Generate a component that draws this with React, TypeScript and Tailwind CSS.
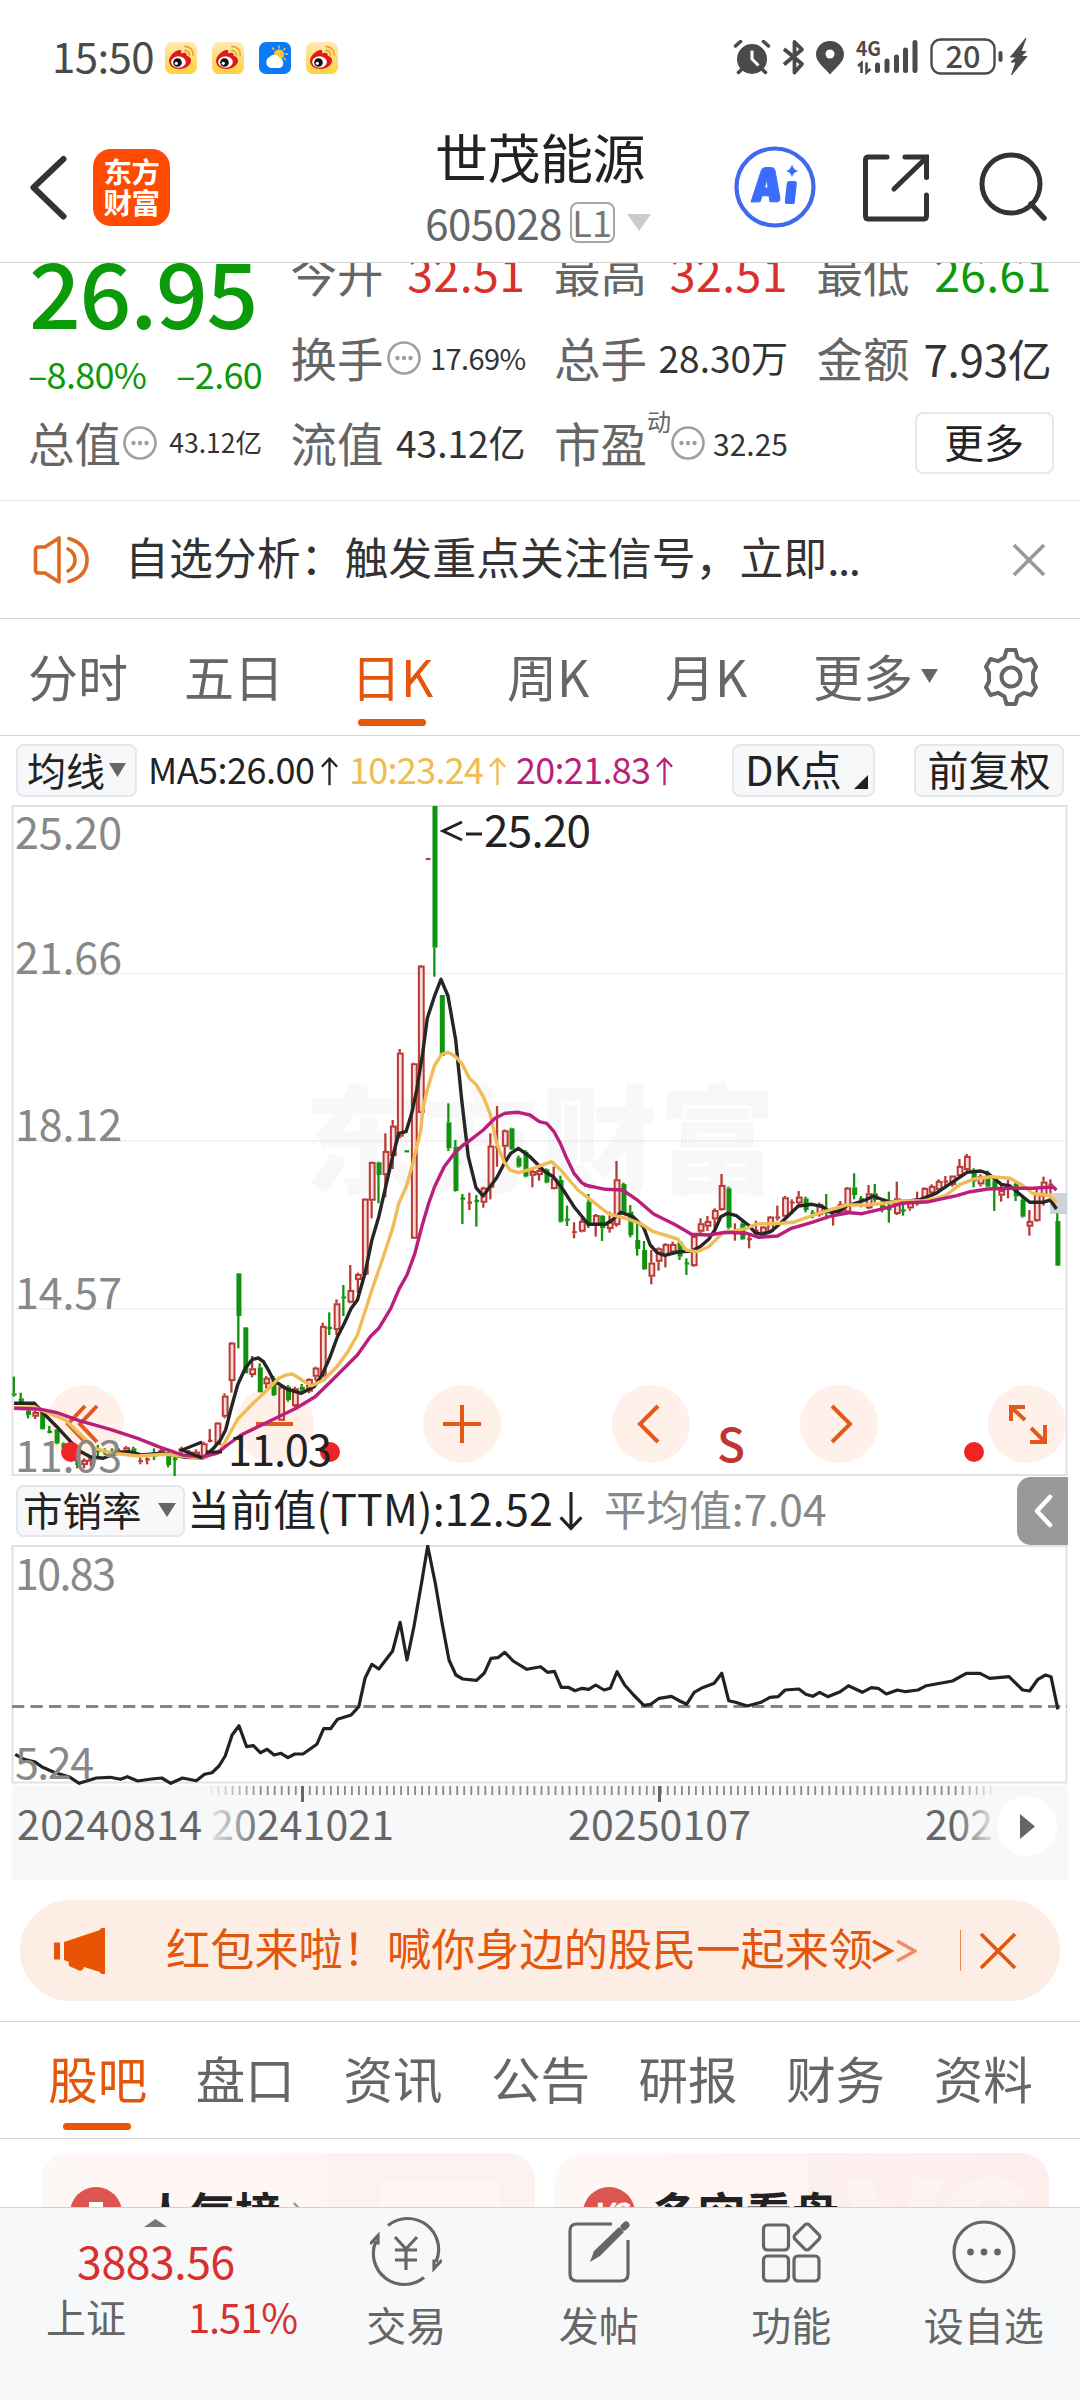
import React from "react";

type Point = [number, number];

const CJK = "'Noto Sans CJK SC', 'Noto Sans', sans-serif";

/* ---------- chart data ---------- */

// Maps a group of plotted points into page space.
const place = (ox: number, oy: number, sx: number, pts: Point[]): Point[] =>
  pts.map(([x, y]) => [ox + x / sx, oy + y / 3]);

const toPoints = (pts: Point[]) => pts.map(([x, y]) => `${x.toFixed(1)},${y.toFixed(1)}`).join(" ");

const ma5: Point[] = [
  ...place(0, 1130, 2.904, [[41,820],[100,820],[125,848],[165,890],[205,935],[235,965],[262,980],[300,985],[330,972],[375,965],[410,975],[470,970],[540,982],[590,983],[620,955],[640,930],[655,900],[670,840],[690,765],[712,715],[733,688],[750,684],[765,695],[782,725],[795,752],[815,765],[835,778],[875,790],[912,770],[935,735],[957,685],[980,620],[1000,580],[1020,535],[1038,510],[1060,430],[1080,330],[1100,260],[1120,170],[1140,80],[1158,10]]),
  ...place(300, 790, 3, [[318,1025],[335,970],[350,900],[368,790],[382,685],[403,620],[423,568],[444,618],[467,750],[485,930],[505,1100],[528,1193],[549,1218],[570,1190],[590,1163],[612,1122],[632,1090],[655,1075],[690,1100],[735,1145],[760,1160],[790,1200],[822,1250],[865,1303]]),
  ...place(540, 1050, 2.904, [[142,523],[190,523],[210,510],[235,487],[270,500],[300,530],[320,585],[340,608],[362,616],[400,606],[440,603],[465,590],[490,568],[508,540],[525,500],[545,490],[570,497],[605,525],[625,548],[645,553],[670,545],[700,518],[750,468],[790,463],[820,470],[845,487],[870,483],[890,468],[945,450],[968,438],[990,447],[1020,457],[1100,450],[1150,430],[1200,395],[1240,367],[1280,363],[1300,370],[1340,403],[1365,408],[1390,430],[1422,457],[1460,457],[1482,450],[1500,477]]),
];

const ma10: Point[] = [
  ...place(0, 1130, 2.904, [[41,833],[100,830],[125,843],[190,870],[250,930],[275,955],[320,968],[400,978],[480,973],[560,982],[600,980],[640,960],[665,915],[690,868],[730,825],[770,785],[810,745],[830,735],[850,732],[880,752],[905,767],[940,750],[980,708],[1010,665],[1038,615],[1055,560],[1080,480],[1110,390],[1140,295],[1158,220],[1180,170],[1200,95],[1222,0]]),
  ...place(300, 790, 3, [[368,960],[382,900],[403,828],[425,793],[444,787],[467,800],[487,823],[508,865],[528,883],[550,920],[570,970],[590,1060],[612,1115],[630,1140],[655,1148],[690,1138],[755,1115]]),
  ...place(540, 1050, 2.904, [[60,360],[110,420],[160,460],[200,492],[250,505],[290,520],[330,545],[400,567],[425,600],[455,605],[490,590],[530,550],[600,535],[630,522],[700,520],[735,517],[790,497],[840,480],[890,465],[945,465],[1000,460],[1050,452],[1110,453],[1150,445],[1180,435],[1220,403],[1260,387],[1310,380],[1365,385],[1400,405],[1430,430],[1480,437],[1500,457]]),
];

const ma20: Point[] = [
  ...place(0, 1130, 2.904, [[41,835],[120,838],[165,848],[230,872],[320,898],[400,925],[460,950],[530,975],[590,980],[630,970],[660,945],[700,915],[760,885],[860,835],[915,800],[960,755],[1038,675],[1075,620],[1100,595],[1135,535],[1160,475],[1182,435],[1205,370],[1225,290],[1245,220],[1262,170],[1290,110],[1320,70],[1345,45]]),
  ...place(300, 790, 3, [[505,1055],[550,1020],[585,985],[615,970],[655,967],[690,975],[718,995],[740,1000],[762,1025],[780,1058],[800,1105],[822,1150],[845,1178],[870,1190]]),
  ...place(540, 1050, 2.904, [[130,405],[190,418],[240,420],[285,452],[330,492],[390,523],[440,553],[490,555],[540,547],[600,550],[635,562],[690,558],[730,535],[790,517],[845,498],[900,488],[935,491],[1000,475],[1050,460],[1130,455],[1210,437],[1250,425],[1300,417],[1360,415],[1430,415],[1490,411],[1500,420]]),
];

const ratioLine: Point[] = place(0, 1470, 1.452, [[22,853],[35,868],[50,875],[62,892],[80,908],[100,920],[115,940],[140,924],[160,922],[175,928],[185,920],[200,933],[220,927],[235,924],[248,940],[265,924],[285,932],[297,913],[308,908],[318,888],[327,858],[337,795],[347,767],[358,830],[368,827],[378,848],[388,838],[398,855],[408,850],[418,863],[428,852],[440,852],[460,823],[470,776],[480,776],[490,748],[510,735],[521,710],[530,625],[540,583],[550,597],[570,543],[581,457],[591,570],[601,470],[612,340],[621,228],[632,340],[642,460],[652,570],[662,615],[672,627],[692,631],[703,610],[713,565],[723,563],[733,547],[745,573],[765,598],[785,590],[795,607],[805,604],[815,652],[825,652],[835,662],[845,655],[855,658],[865,645],[877,660],[886,655],[896,605],[907,645],[920,675],[935,706],[945,703],[957,685],[975,679],[987,693],[997,703],[1008,667],[1020,653],[1037,640],[1048,610],[1058,692],[1068,697],[1085,708],[1105,697],[1118,682],[1130,680],[1140,660],[1160,657],[1170,673],[1180,679],[1190,667],[1202,680],[1220,665],[1232,647],[1252,667],[1265,653],[1275,655],[1287,672],[1303,660],[1315,665],[1333,660],[1345,647],[1383,633],[1403,610],[1423,610],[1437,625],[1465,620],[1485,660],[1495,663],[1507,628],[1518,615],[1526,620],[1536,718]]);

// [x, high, body top, body bottom, low, rising]
type Candle = [number, number, number, number, number, 0 | 1];

const scaleCandles = (ox: number, oy: number, sx: number, rows: Candle[]): Candle[] =>
  rows.map(([x, h, t, b, l, up]) => [ox + x / sx, oy + h / 3, oy + t / 3, oy + b / 3, oy + l / 3, up]);

const candles: Candle[] = [
  ...scaleCandles(0, 1130, 2.904, [
    [41,740,790,797,800,0],[61,788,805,820,820,0],[82,838,842,855,865,0],[103,843,846,860,867,1],[123,845,845,898,898,0],[144,888,903,908,910,0],[165,898,898,940,943,0],[185,937,940,955,960,0],[225,975,980,1005,1015,0],[245,985,990,1005,1015,1],[265,980,985,995,1010,1],[285,945,960,966,980,0],[305,955,960,970,975,0],[326,955,962,968,975,0],[346,955,960,972,975,1],[367,948,952,965,968,1],[388,950,955,970,975,0],[408,982,990,997,1003,1],[428,982,986,990,1003,1],[448,955,975,980,990,0],[469,955,960,970,978,1],[489,965,970,1005,1012,0],[508,970,985,990,1038,0],[528,950,955,965,970,1],[550,960,965,980,985,1],[570,958,965,978,982,1],
    [592,935,940,985,988,1],[610,897,930,935,937,1],[632,876,878,945,945,1],[653,790,797,860,865,1],[673,636,638,753,788,1],[693,430,430,558,655,0],[713,592,592,730,730,0],[733,678,715,735,742,1],[755,700,712,787,787,0],[774,738,743,763,775,1],[795,738,745,795,798,0],[817,768,770,872,872,1],[837,765,770,810,815,0],[857,770,775,828,832,1],[877,762,770,782,788,0],[898,745,747,785,790,1],[917,710,713,740,752,1],[938,578,588,740,742,1],[957,547,592,596,615,0],[978,508,520,600,615,1],[998,465,500,505,558,0],[1018,405,480,518,520,1],[1040,428,432,450,490,1],[1060,205,206,434,434,1],[1080,95,96,212,265,1],[1100,95,97,135,220,0],
  ]),
  ...scaleCandles(300, 790, 3, [
    [257,1030,1083,1155,1222,1],[279,990,1007,1098,1137,1],[300,777,788,1040,1045,1],[320,1082,1082,1086,1086,0],[342,818,820,1346,1346,1],[363,525,527,969,969,1],[384,205,205,209,209,1],[404,48,48,473,560,0],[426,615,615,798,798,0],[446,940,997,1075,1083,0],[467,1050,1070,1203,1205,0],[488,1212,1224,1228,1302,0],[509,1208,1236,1240,1260,1],[530,1215,1231,1235,1310,0],[551,1190,1193,1238,1253,1],[572,1030,1067,1193,1228,1],[592,948,1070,1074,1130,1],[615,1018,1021,1070,1110,1],[635,1013,1015,1078,1080,0],[656,1097,1103,1130,1133,0],[677,1080,1085,1160,1162,0],[698,1138,1143,1157,1192,1],[718,1130,1140,1155,1172,1],[740,1135,1138,1178,1180,0],[762,1130,1165,1197,1198,1],[782,1157,1170,1295,1298,0],[802,1247,1287,1291,1308,0],[823,1297,1323,1330,1345,1],[846,1285,1293,1325,1327,1],[866,1212,1235,1308,1314,0],[888,1272,1275,1307,1340,1],
  ]),
  ...scaleCandles(540, 1050, 2.904, [
    [181,495,497,535,573,0],[203,485,515,537,548,1],[223,333,388,525,530,1],[243,398,402,488,490,0],[263,465,485,555,562,0],[283,515,570,597,617,0],[303,573,600,658,660,0],[324,600,638,680,703,1],[345,592,595,635,662,1],[365,580,582,618,652,1],[386,575,582,607,610,1],[406,572,575,620,630,0],[426,625,638,643,675,0],[447,555,558,648,650,1],[467,505,520,545,550,1],[487,498,513,530,543,1],[508,475,480,508,540,1],[528,372,405,480,482,1],[548,410,415,533,538,0],[567,520,545,550,572,1],[588,515,520,568,570,0],[608,553,565,570,595,1],[628,512,540,545,556,1],[648,528,530,550,552,1],[669,498,500,545,548,1],[690,467,500,505,512,1],[712,438,442,500,500,1],[732,448,455,460,492,1],[752,423,440,460,465,1],[772,440,445,480,487,0],[792,480,488,492,505,0],[812,458,462,495,500,1],[832,432,485,490,508,0],[852,478,495,500,527,1],[873,453,462,485,490,1],[893,411,413,487,488,1],[913,370,412,435,448,0],[933,438,445,450,472,0],[955,405,430,475,478,1],[973,402,430,450,457,0],[994,450,455,480,487,0],[1014,425,475,480,518,0],[1037,395,445,492,495,1],[1055,450,480,483,497,0],[1075,448,455,475,482,1],[1096,425,445,450,467,1],[1117,412,414,450,455,1],[1138,403,408,430,440,1],[1158,388,393,420,430,1],[1178,378,392,397,410,1],[1198,376,377,405,410,1],[1219,327,348,378,380,1],[1240,312,318,360,362,1],[1260,355,360,395,412,0],[1280,373,378,403,410,1],[1300,362,370,410,412,0],[1320,378,392,415,483,0],[1340,400,420,437,455,1],[1360,390,410,414,445,1],[1382,393,400,440,453,0],[1402,440,450,500,503,0],[1422,480,513,530,557,1],[1443,412,430,513,515,1],[1463,380,395,440,467,1],[1483,388,402,406,430,1],[1503,490,513,647,648,0],
  ]),
];

/* ---------- small pieces ---------- */

const Caret = ({ className }: { className: string }) => (
  <svg viewBox="0 0 16 13" preserveAspectRatio="none" className={className}>
    <path d="M0 0h16L8 13z" fill="currentColor" />
  </svg>
);

const InfoDots = () => (
  <svg viewBox="0 0 34 34" className="h-[34px] w-[34px] shrink-0 text-[#a0a0a0]">
    <circle cx="17" cy="17" r="15.5" fill="none" stroke="currentColor" strokeWidth="2.6" />
    <circle cx="10.5" cy="17" r="2.2" fill="currentColor" />
    <circle cx="17" cy="17" r="2.2" fill="currentColor" />
    <circle cx="23.5" cy="17" r="2.2" fill="currentColor" />
  </svg>
);

const WeiboIcon = () => (
  <svg viewBox="0 0 32 32" className="h-8 w-8">
    <defs>
      <linearGradient id="weiboBg" x1="0" y1="0" x2="0" y2="1">
        <stop offset="0" stopColor="#fdeab8" />
        <stop offset="1" stopColor="#fdd23e" />
      </linearGradient>
    </defs>
    <rect width="32" height="32" rx="7" fill="url(#weiboBg)" />
    <path d="M4 19c0-5 6-10.5 10-11 3-.3 2.5 2 2 3.5 3-1.5 6.5-1 5.5 2 3 1 5 3 4.5 6C25 24.5 19 27 14 27S4 24 4 19z" fill="#e01a1a" />
    <ellipse cx="13.5" cy="20" rx="7.3" ry="5.8" fill="#fff" />
    <circle cx="12.5" cy="20.5" r="4.3" fill="#111" />
    <circle cx="11.3" cy="21.3" r="1.6" fill="#fff" />
    <path d="M20 4.5c5 0 8.5 3.5 8.3 8.8M20 8.5c3 0 4.6 2 4.4 4.5" fill="none" stroke="#f4a62a" strokeWidth="1.8" strokeLinecap="round" />
  </svg>
);

const WeatherIcon = () => (
  <svg viewBox="0 0 32 32" className="h-8 w-8">
    <rect width="32" height="32" rx="7" fill="#0b7bf5" />
    <circle cx="20" cy="12.5" r="5" fill="#ffc83a" />
    <path d="M20 4v2M26 6.5l-1.2 1.4M28.5 12h-2M13.5 6l1.3 1.5M26.5 17.5L25 16.4" stroke="#ffc83a" strokeWidth="1.4" strokeLinecap="round" />
    <path d="M11.5 26a6 6 0 0 1-.6-11.2 5.6 5.6 0 0 1 9.5 1.2A5.3 5.3 0 0 1 21 26z" fill="#fff" />
  </svg>
);

/* ---------- sections ---------- */

const StatusBar = () => (
  <div className="flex h-[110px] shrink-0 items-start justify-between pl-[52px] pr-[52px] pt-[36px] text-[#4a4a4a]">
    <div className="flex h-[44px] items-center">
      <span className="w-[113px] -translate-y-[3px] text-[42px] leading-none tracking-[-0.6px]">15:50</span>
      <div className="flex gap-[15px]">
        <WeiboIcon />
        <WeiboIcon />
        <WeatherIcon />
        <WeiboIcon />
      </div>
    </div>
    <svg viewBox="732 36 296 40" className="h-[40px] w-[296px]" fill="none">
      <circle cx="752" cy="59" r="15" fill="#4a4a4a" />
      <path d="M735.5 46l5-4.5M768.5 46l-5-4.5M742 69l-3.5 3.5M762 69l3.5 3.5" stroke="#4a4a4a" strokeWidth="3.5" strokeLinecap="round" />
      <path d="M752 50.5V59l6.5 6.5" stroke="#fff" strokeWidth="3" />
      <path d="M784 49l18 15-7.5 8.5V42l7.5 7.5-18 15" stroke="#4a4a4a" strokeWidth="3.8" strokeLinejoin="round" />
      <path d="M830 41c8 0 14 6 14 13.5 0 8-9.5 14-14 20-4.5-6-14-12-14-20C816 47 822 41 830 41z" fill="#4a4a4a" />
      <circle cx="830" cy="54" r="4.5" fill="#fff" />
      <text x="856" y="56" fontSize="20" fontWeight="700" textLength="25" lengthAdjust="spacingAndGlyphs" fill="#4a4a4a">4G</text>
      <path d="M858 66l3.5-3v10M866.5 62.5v10l4-3.5" stroke="#4a4a4a" strokeWidth="2.6" />
      <path d="M877.5 65v5.5M887 61v9.5M896.5 57v13.5M905.5 50v20.5M915 42.5v28" stroke="#4a4a4a" strokeWidth="5" strokeLinecap="round" />
      <rect x="931.5" y="39.5" width="63" height="34" rx="9" stroke="#4a4a4a" strokeWidth="2.4" />
      <text x="963" y="67.5" textAnchor="middle" fontSize="31" fontWeight="500" textLength="35" lengthAdjust="spacingAndGlyphs" fill="#4a4a4a">20</text>
      <path d="M1000.5 53v7" stroke="#4a4a4a" strokeWidth="4" strokeLinecap="round" />
      <path d="M1026 38l-15.5 19h6l-5.5 5h5l-4.5 13 15.5-18.5h-6l5-5h-5z" fill="#4a4a4a" stroke="#4a4a4a" strokeWidth="1" />
    </svg>
  </div>
);

const Header = () => (
  <div className="flex h-[153px] shrink-0 border-b border-[#d2d2d2]">
    <div className="flex w-[360px] items-start pl-[28px] pt-[39px]">
      <svg viewBox="0 0 40 70" className="mt-[4px] h-[70px] w-[40px]">
        <path d="M35.5 6L5.5 34.5l30 29" fill="none" stroke="#333" strokeWidth="6" strokeLinecap="round" strokeLinejoin="round" />
      </svg>
      <div className="ml-[25px] flex h-[77px] w-[77px] flex-col items-center justify-center rounded-[18px] bg-[#ff4a04] pb-[4px] text-[28.5px] font-bold leading-[31px] tracking-[-0.5px] text-white">
        <span>东方</span>
        <span>财富</span>
      </div>
    </div>
    <div className="flex w-[360px] flex-col items-center pt-[16px]">
      <span className="text-[53px] leading-[60px] tracking-[-0.5px] text-[#222]">世茂能源</span>
      <div className="mt-[12px] flex items-center pr-[4px]">
        <span className="text-[42px] leading-[48px] tracking-[-0.6px] text-[#666]">605028</span>
        <span className="ml-[8px] flex h-[41px] w-[45px] items-center justify-center rounded-[8px] border-2 border-[#a5a5a5] pb-[3px] text-[36px] leading-none text-[#777]">L1</span>
        <Caret className="ml-[12px] h-[17px] w-[24px] text-[#ccc]" />
      </div>
    </div>
    <svg viewBox="720 110 360 150" className="h-[150px] w-[360px] shrink-0" fill="none">
      <circle cx="775" cy="187" r="38.5" stroke="#4169ee" strokeWidth="4.2" />
      <g transform="translate(720 60)" fill="#3a6cff">
        <path fillRule="evenodd" d="M31 142L41.5 110Q42.5 107.5 46 107.5h5Q54.5 107.5 55 110.5l5 28q.3 3-2.5 3.3h-7.5l-1-6h-7l-2 6zM44.5 128h3.5l-1-9z" stroke="#3a6cff" strokeWidth="1" />
        <path d="M69 121h5.5q2.500 0 2.300 2.500l-2 19q-.3 1.500-2 1.500H66.500q-2-.2-1.700-2.200l2-18.500q.4-2.300 2.200-2.300z" />
        <path d="M72 104.5q1.500 5.500 6.500 6.500-5 1-6.500 6-1.500-5-6-6 4.500-1 6-6.500z" />
      </g>
      <path d="M887 157h-18.5q-3 0-3 3v56q0 3 3 3h55q3 0 3-3v-21M905 157h21.500v20.500M894 189l31-30" stroke="#333" strokeWidth="5" strokeLinecap="round" />
      <circle cx="1011" cy="184" r="29" stroke="#333" strokeWidth="5" />
      <path d="M1031 204l13 14" stroke="#333" strokeWidth="5.5" strokeLinecap="round" />
    </svg>
  </div>
);

const Quote = ({ label, children }: { label: React.ReactNode; children: React.ReactNode }) => (
  <div className="flex h-[85px] items-center justify-between whitespace-nowrap">
    <span className="flex items-center text-[46.5px] leading-none text-[#666]">{label}</span>
    {children}
  </div>
);

const QuotePanel = () => (
  <div className="h-[238px] shrink-0 overflow-hidden border-b border-[#e6e6e6]">
    <div className="-mt-[33px] grid grid-cols-[234px_235px_234px_235px] gap-x-[28.500px] pl-[28px] leading-none">
      <div className="row-span-2 flex h-[170px] flex-col text-[#0a9a0a]">
        <span className="mt-[14px] h-[105px] whitespace-nowrap pl-[1px] text-[91px] font-medium leading-[91px] tracking-[-1.3px]">26.95</span>
        <div className="flex justify-between text-[36px] leading-[48px] tracking-[-0.7px]">
          <span>–8.80%</span>
          <span>–2.60</span>
        </div>
      </div>
      <Quote label="今开"><span className="text-[46.5px] tracking-[0.4px] text-[#d8302c]">32.51</span></Quote>
      <Quote label="最高"><span className="text-[46.5px] tracking-[0.4px] text-[#d8302c]">32.51</span></Quote>
      <Quote label="最低"><span className="text-[46.5px] tracking-[0.2px] text-[#0a9a0a]">26.61</span></Quote>
      <Quote label={<>换手<span className="ml-[3px]"><InfoDots /></span></>}><span className="text-[29px] tracking-[-0.6px] text-[#333]">17.69%</span></Quote>
      <Quote label="总手"><span className="text-[37px] text-[#333]">28.30万</span></Quote>
      <Quote label="金额"><span className="text-[44px] tracking-[-0.3px] text-[#333]">7.93亿</span></Quote>
      <Quote label={<>总值<span className="ml-[2px]"><InfoDots /></span></>}><span className="text-[26.5px] text-[#333]">43.12亿</span></Quote>
      <Quote label="流值"><span className="text-[37px] text-[#333]">43.12亿</span></Quote>
      <Quote label={<>市盈<span className="-mt-[44px] text-[24px]">动</span><InfoDots /></>}>
        <span className="text-[30px] text-[#333]">32.25</span>
      </Quote>
      <div className="flex h-[85px] items-center justify-end">
        <div className="mt-[1px] flex h-[62px] w-[139px] translate-x-[2px] items-center justify-center rounded-[8px] border-2 border-[#e8e8e8] pb-[4px] text-[40px] text-[#222]">更多</div>
      </div>
    </div>
  </div>
);

const Notice = () => (
  <div className="flex h-[118px] shrink-0 items-center border-b border-[#d2d2d2] pl-[32px] pr-[33px]">
    <svg viewBox="0 0 60 50" className="h-[50px] w-[60px]" fill="none" stroke="#e06a22" strokeWidth="3.6" strokeLinejoin="round" strokeLinecap="round">
      <path d="M3.5 15q0-3 3-3H13L27 3v44l-14-9H6.5q-3 0-3-3z" />
      <path d="M36 14q7 3.5 7 11t-7 11M37 3.5Q55 9 55 25T37 46.5" />
    </svg>
    <span className="ml-[33px] flex-1 pb-[6px] text-[43.9px] leading-none text-[#333]">自选分析：触发重点关注信号，立即<span className="tracking-[-1.4px]">...</span></span>
    <svg viewBox="0 0 36 36" className="h-[36px] w-[36px]">
      <path d="M3 3l30 30M33 3L3 33" stroke="#999" strokeWidth="3.6" />
    </svg>
  </div>
);

const PeriodTabs = () => (
  <div className="flex h-[117px] shrink-0 items-center border-b border-[#d2d2d2] text-[50px] leading-none text-[#666]">
    <span className="ml-[28px] w-[156px] pb-[4px]">分时</span>
    <span className="w-[167px] pb-[4px]">五日</span>
    <div className="relative flex h-full w-[156px] items-center pb-[4px] text-[#e2560d]">
      日K
      <i className="absolute bottom-[9px] left-[7px] h-[7px] w-[68px] rounded-full bg-[#e8560a]" />
    </div>
    <span className="w-[158px] pb-[4px]">周K</span>
    <span className="w-[148px] pb-[4px]">月K</span>
    <span className="w-[108px] pb-[4px]">更多</span>
    <Caret className="-mt-[2px] h-[14px] w-[17px] text-[#666]" />
    <svg viewBox="0 0 60 60" className="ml-[43px] h-[60px] w-[60px]" fill="none" stroke="#666" strokeWidth="4" strokeLinejoin="round">
      <path d="M25.5 3h9l2 7.5 6.5 3.7 7.5-2.2 4.5 7.8-3 5.7v9l3 5.7-4.5 7.8-7.5-2.2-6.5 3.7-2 7.5h-9l-2-7.5-6.5-3.7-7.5 2.2L5 40.2l3-5.7v-9L5 19.8 9.500 12l7.500 2.200 6.500-3.700z" />
      <circle cx="30" cy="30" r="9.5" />
    </svg>
  </div>
);

const chip = "flex items-center rounded-[8px] border-2 border-[#e4e7eb] bg-[#f7f8fa] leading-none text-[#222]";

const Arrow = ({ down = false }: { down?: boolean }) => (
  <svg viewBox="0 0 20 30" className={down ? "ml-[5px] inline-block h-[39px] w-[26px] rotate-180 align-[-5px]" : "ml-[5px] inline-block h-[30px] w-[19px] align-[-2px]"}>
    <path d="M10 30V2M2 10.5l8-8.5 8 8.5" fill="none" stroke="currentColor" strokeWidth="2.4" />
  </svg>
);

const AverageRow = () => (
  <div className="flex h-[68px] shrink-0 items-center whitespace-nowrap pl-[16px] pr-[16px]">
    <div className={`${chip} h-[53px] w-[121px] pb-[2px] pl-[9px] text-[39px]`}>
      均线
      <Caret className="ml-[4px] mt-[2px] h-[14px] w-[17px] text-[#666]" />
    </div>
    <span className="ml-[11px] w-[201px] pb-[4px] text-[36px] leading-none tracking-[-0.5px] text-[#222]">MA5:26.00<Arrow /></span>
    <span className="w-[167px] pb-[4px] text-[36px] leading-none tracking-[-0.7px] text-[#f0bb52]">10:23.24<Arrow /></span>
    <span className="pb-[4px] text-[36px] leading-none tracking-[-0.7px] text-[#bb1f7c]">20:21.83<Arrow /></span>
    <div className={`${chip} ml-auto h-[53px] w-[143px] justify-between pb-[2px] pl-[11px] pr-[5px] text-[41.500px]`}>
      DK点
      <svg viewBox="0 0 14 14" className="mt-[26px] h-[14px] w-[14px]"><path d="M14 0v14H0z" fill="#222" /></svg>
    </div>
    <div className={`${chip} ml-[39px] h-[53px] w-[150px] justify-center pb-[3px] text-[41px]`}>前复权</div>
  </div>
);

const RoundButton = ({ children }: { children: React.ReactNode }) => (
  <svg viewBox="-39 -39 78 78" className="h-[78px] w-[78px] shrink-0" fill="none" stroke="#e2591a" strokeWidth="4">
    <circle r="39" fill="#fff1e9" stroke="none" />
    {children}
  </svg>
);

const PriceChart = () => (
  <div className="relative h-[672px] shrink-0">
    <div className="absolute inset-x-0 top-[581px] flex pl-[46px]">
      <div className="w-[190px]"><RoundButton><path d="M0-18L-17 0 0 18M12-18L-5 0 12 18" /></RoundButton></div>
      <div className="w-[187px]"><RoundButton><path d="M-19 0H18" /></RoundButton></div>
      <div className="w-[189px]"><RoundButton><path d="M-19 0H19M0-19V19" /></RoundButton></div>
      <div className="w-[188px]"><RoundButton><path d="M7-18L-11 0 7 18" /></RoundButton></div>
      <div className="w-[188px]"><RoundButton><path d="M-7-18L11 0-7 18" /></RoundButton></div>
      <RoundButton><path d="M-2-17H-16V-3M-16-17L-2-4M18 1V18H3M18 18L4 4" /></RoundButton>
    </div>
    <svg viewBox="0 804 1080 672" className="pointer-events-none relative block h-[672px] w-[1080px]" fill="none">
      <text x="304" y="1184" fontSize="117" fontWeight="900" fill="#f8f8f8" textLength="472">东方财富</text>
      <path d="M12.5 973.5H1067M12.5 1141H1067M12.5 1309H1067" stroke="#e0e0e0" strokeWidth="1.3" strokeDasharray="2 2" />
      <rect x="12.5" y="806" width="1054" height="669" stroke="#e2e2e2" strokeWidth="2" />
      <rect x="1050" y="1193" width="17" height="21" fill="#cfd2d9" />
      {candles.map(([x, high, top, bottom, low, up], i) => {
        const color = up ? "#b83a35" : "#109410";
        const thin = bottom - top < 3;
        return (
          <g key={i} stroke={color} fill={up && !thin ? "#fbdcd9" : color}>
            {high < top && <path d={`M${x - 0.3} ${high}V${top}`} strokeWidth="2.3" />}
            {low > bottom && <path d={`M${x - 0.3} ${bottom}V${low}`} strokeWidth="2.3" />}
            {thin ? (
              <path d={`M${x - 2.2} ${(top + bottom) / 2}H${x + 2.5}`} strokeWidth="2.2" />
            ) : up ? (
              <rect x={x - 2.1} y={top + 0.9} width="4.8" height={Math.max(bottom - top - 1.8, 1)} strokeWidth="2" />
            ) : (
              <rect x={x - 2.2} y={top} width="5" height={bottom - top} stroke="none" />
            )}
          </g>
        );
      })}
      <g strokeWidth="3.4" strokeLinejoin="round">
        <polyline points={toPoints(ma5)} stroke="#262626" />
        <polyline points={toPoints(ma10)} stroke="#efbc55" />
        <polyline points={toPoints(ma20)} stroke="#bb1f7c" />
      </g>
      <g fill="#f02424">
        <circle cx="71" cy="1452" r="10" />
        <circle cx="330" cy="1452" r="10" />
        <circle cx="974" cy="1452" r="10" />
      </g>
      <g fill="#888" fontSize="43">
        <text x="15" y="849" textLength="107">25.20</text>
        <text x="15" y="974" textLength="107">21.66</text>
        <text x="15" y="1141" textLength="107">18.12</text>
        <text x="15" y="1309" textLength="107">14.57</text>
        <text x="15" y="1472" textLength="107">11.03</text>
      </g>
      <path d="M462 822l-19 9 19 9M466 834h16M202 1442l-20 8 20 8M206 1452h16" stroke="#222" strokeWidth="3" />
      <text x="484" y="847" fontSize="44" fill="#222" textLength="107">25.20</text>
      <text x="717" y="1462" fontSize="46" fontWeight="500" fill="#c03433" textLength="28" lengthAdjust="spacingAndGlyphs">S</text>
      <text x="228" y="1466" fontSize="43.5" fill="#222" textLength="104">11.03</text>
    </svg>
  </div>
);

const IndicatorRow = () => (
  <div className="flex h-[69px] shrink-0 items-center whitespace-nowrap pl-[16px] pr-[12px]">
    <div className={`${chip} h-[52px] w-[169px] pb-[3px] pl-[5px] text-[39.500px]`}>
      市销率
      <Caret className="ml-[16px] mt-[2px] h-[14px] w-[18px] text-[#666]" />
    </div>
    <span className="ml-[2px] w-[417px] pb-[5px] text-[43px] leading-none tracking-[0.15px] text-[#222]">当前值(TTM):12.52<Arrow down /></span>
    <span className="pb-[5px] text-[42.5px] leading-none tracking-[0.1px] text-[#888]">平均值:7.04</span>
    <div className="ml-auto flex h-[68px] w-[51px] items-center justify-center rounded-l-[14px] bg-[#999]">
      <svg viewBox="0 0 20 34" className="h-[34px] w-[20px]"><path d="M17 3L4 17l13 14" fill="none" stroke="#fff" strokeWidth="4.5" strokeLinecap="round" strokeLinejoin="round" /></svg>
    </div>
  </div>
);

const ticks = Array.from({ length: 113 }, (_, i) => 204.5 + i * 7.02);

const RatioChart = () => (
  <svg viewBox="0 1545 1080 335" className="block h-[335px] w-[1080px] shrink-0" fill="none">
    <defs>
      <linearGradient id="fadeLeft"><stop offset="0" stopColor="#f7f8fa" /><stop offset="1" stopColor="#f7f8fa" stopOpacity="0" /></linearGradient>
      <linearGradient id="fadeRight"><stop offset="0" stopColor="#f7f8fa" stopOpacity="0" /><stop offset="1" stopColor="#f7f8fa" /></linearGradient>
    </defs>
    <rect x="12.5" y="1546" width="1054" height="236.5" stroke="#e2e2e2" strokeWidth="2" />
    <path d="M12 1706.5H1067" stroke="#858585" strokeWidth="3.2" strokeDasharray="12.3 6.2" />
    <polyline points={toPoints(ratioLine)} stroke="#222" strokeWidth="3.2" strokeLinejoin="round" />
    <rect x="12" y="1785" width="1056" height="95" fill="#f7f8fa" />
    <path d={ticks.map((x) => `M${x.toFixed(1)} 1786V1795`).join("")} stroke="#888" strokeWidth="1.8" />
    <path d="M302.5 1786V1802M659.5 1786V1802" stroke="#666" strokeWidth="3" />
    <g fontSize="43">
      <g fill="#888">
        <text x="15" y="1590" textLength="101">10.83</text>
        <text x="15" y="1779" textLength="79">5.24</text>
      </g>
      <g fill="#666" fontSize="41">
        <text x="17" y="1840" textLength="185">20240814</text>
        <text x="211" y="1840" textLength="183">20241021</text>
        <text x="568" y="1840" textLength="183">20250107</text>
        <text x="925" y="1840" textLength="68">202</text>
      </g>
    </g>
    <rect x="203" y="1785" width="60" height="94" fill="url(#fadeLeft)" />
    <rect x="955" y="1785" width="45" height="94" fill="url(#fadeRight)" />
    <circle cx="1027" cy="1826" r="30" fill="#fff" />
    <path d="M1020 1814l15 12.5-15 12.5z" fill="#666" />
  </svg>
);

const Banner = () => (
  <div className="mx-[20px] mt-[20px] flex h-[101px] shrink-0 items-center rounded-full bg-[#fceee5] pl-[34px] pr-[43px] text-[#e2560d]">
    <svg viewBox="0 0 52 46" className="h-[46px] w-[52px] text-[#e85404]" fill="currentColor">
      <path d="M0 14.5h6v17H0zM10 14L46 2q0-2 2-2h3v46h-3q-1.5 0-2-2L30 39q-2 6-7 2.5l-7-3q-2-1-1-4.5l-5-2z" />
    </svg>
    <span className="ml-[60px] whitespace-nowrap pb-[6px] text-[44.2px] leading-none">红包来啦！喊你身边的股民一起来领</span>
    <svg viewBox="0 0 46 24" className="-ml-[2px] h-[24px] w-[46px]" fill="none" strokeWidth="3.4">
      <path d="M2 2l18 10L2 22" stroke="#e2560d" />
      <path d="M26 2l18 10-18 10" stroke="#ec8d5e" />
    </svg>
    <i className="ml-auto mr-[18px] h-[41px] w-[1.5px] bg-[#e58a55]" />
    <svg viewBox="0 0 38 38" className="h-[38px] w-[38px]"><path d="M2 2l34 34M36 2L2 36" stroke="#e2560d" strokeWidth="3.6" /></svg>
  </div>
);

const sections = ["股吧", "盘口", "资讯", "公告", "研报", "财务", "资料"];

const SectionTabs = () => (
  <div className="mt-[20px] grid h-[118px] shrink-0 grid-cols-7 border-y border-[#d2d2d2] pl-[24px] pr-[23px] text-[49.500px] leading-none text-[#666]">
    {sections.map((name, i) => (
      <div key={name} className={i === 0 ? "relative flex items-center justify-center pb-[5px] text-[#e2560d]" : "flex items-center justify-center pb-[5px]"}>
        {name}
        {i === 0 && <i className="absolute bottom-[8px] left-[39px] h-[7px] w-[68px] rounded-full bg-[#e8560a]" />}
      </div>
    ))}
  </div>
);

const Cards = () => (
  <div className="flex min-h-0 flex-1 items-start gap-[20px] overflow-hidden px-[41px] pt-[14px]">
    <div className="relative flex h-[120px] w-[494px] shrink-0 items-center overflow-hidden rounded-[28px] bg-[linear-gradient(90deg,#fef8f5_0%,#fef6f4_57.5%,#fdf2f0_58%,#fdf2f0_100%)] pl-[29px]">
      <i className="absolute left-[339px] top-[27px] h-[93px] w-[120px] bg-[#fef6f4]" />
      <svg viewBox="0 0 52 52" className="h-[52px] w-[52px]"><circle cx="26" cy="26" r="26" fill="#dc5550" /><path d="M10 24h9v-9h14v13h9v16H10z" fill="#fff" /></svg>
      <span className="ml-[21px] pb-[4px] text-[46px] font-bold leading-none text-[#222]">人气榜</span>
      <svg viewBox="0 0 12 22" className="ml-[12px] h-[22px] w-[12px]"><path d="M1 1l9 10-9 10" fill="none" stroke="#999" strokeWidth="2.5" /></svg>
    </div>
    <div className="relative flex h-[120px] w-[494px] shrink-0 items-center overflow-hidden rounded-[28px] bg-[linear-gradient(90deg,#fef8f5_0%,#fef4f2_51%,#fcf0ee_51.5%,#fdeeec_100%)] pl-[28px]">
      <span className="absolute -top-[2px] left-[290px] text-[150px] font-black leading-none text-[#fef3f1]">VS</span>
      <div className="flex h-[52px] w-[52px] items-center justify-center rounded-full bg-[#dc5550] pb-[2px] text-[30px] font-bold italic leading-none tracking-[-2px] text-white">VS</div>
      <span className="relative ml-[16px] pb-[4px] text-[47px] font-bold leading-none text-[#222]">多空看盘</span>
    </div>
  </div>
);

const navItems: { label: string; icon: React.ReactNode }[] = [
  {
    label: "交易",
    icon: (
      <>
        <path d="M18 9.5A31 31 0 0 1 66 46M54 61.5A31 31 0 0 1 6 25M0 28l8-8.5v9M72 44l-8 8.5v-9" />
        <path d="M25 21l11 12 11-12M36 33v21M25 34h22M25 44h22" />
      </>
    ),
  },
  {
    label: "发帖",
    icon: (
      <>
        <path d="M49 8H14q-7 0-7 7v43q0 7 7 7h44q7 0 7-7V24" />
        <path d="M27 46l4-11 25-24 5 5-24 24z" fill="#666" stroke="none" />
        <path d="M61 11l2-2" strokeWidth="7" strokeLinecap="round" />
      </>
    ),
  },
  {
    label: "功能",
    icon: (
      <>
        <rect x="8.5" y="9" width="25" height="25" rx="4" />
        <rect x="8.5" y="40" width="25" height="25" rx="4" />
        <rect x="39" y="40" width="25" height="25" rx="4" />
        <rect x="42" y="11" width="20" height="20" rx="3" transform="rotate(45 52 21)" />
      </>
    ),
  },
  {
    label: "设自选",
    icon: (
      <>
        <circle cx="36" cy="36" r="30" />
        <g fill="#666" stroke="none"><circle cx="22.5" cy="36" r="3.4" /><circle cx="36" cy="36" r="3.4" /><circle cx="49.5" cy="36" r="3.4" /></g>
      </>
    ),
  },
];

const BottomBar = () => (
  <div className="flex h-[193px] shrink-0 border-t border-[#d2d2d2] bg-[#f7f8fa] leading-none">
    <div className="flex w-[310px] flex-col items-center pt-[11px]">
      <svg viewBox="0 0 23 8" className="h-[8px] w-[23px]"><path d="M0 8L11.5 0 23 8z" fill="#777" /></svg>
      <span className="mt-[11px] pl-[2px] text-[44.5px] leading-[44px] tracking-[-0.4px] text-[#d8302c]">3883.56</span>
      <div className="mt-[14px] flex w-full items-center justify-between pl-[46px] pr-[13px]">
        <span className="text-[40px] text-[#666]">上证</span>
        <span className="text-[40px] tracking-[-1.1px] text-[#d8302c]">1.51%</span>
      </div>
    </div>
    {navItems.map(({ label, icon }) => (
      <div key={label} className="flex w-[192.5px] flex-col items-center pt-[8px]">
        <svg viewBox="0 0 72 72" className="h-[72px] w-[72px]" fill="none" stroke="#666" strokeWidth="3.2">{icon}</svg>
        <span className="mt-[16px] text-[40px] text-[#666]">{label}</span>
      </div>
    ))}
  </div>
);

export default function App() {
  return (
    <div className="flex h-[2400px] w-[1080px] flex-col overflow-hidden bg-white font-normal" style={{ fontFamily: CJK }}>
      <StatusBar />
      <Header />
      <QuotePanel />
      <Notice />
      <PeriodTabs />
      <AverageRow />
      <PriceChart />
      <IndicatorRow />
      <RatioChart />
      <Banner />
      <SectionTabs />
      <Cards />
      <BottomBar />
    </div>
  );
}
